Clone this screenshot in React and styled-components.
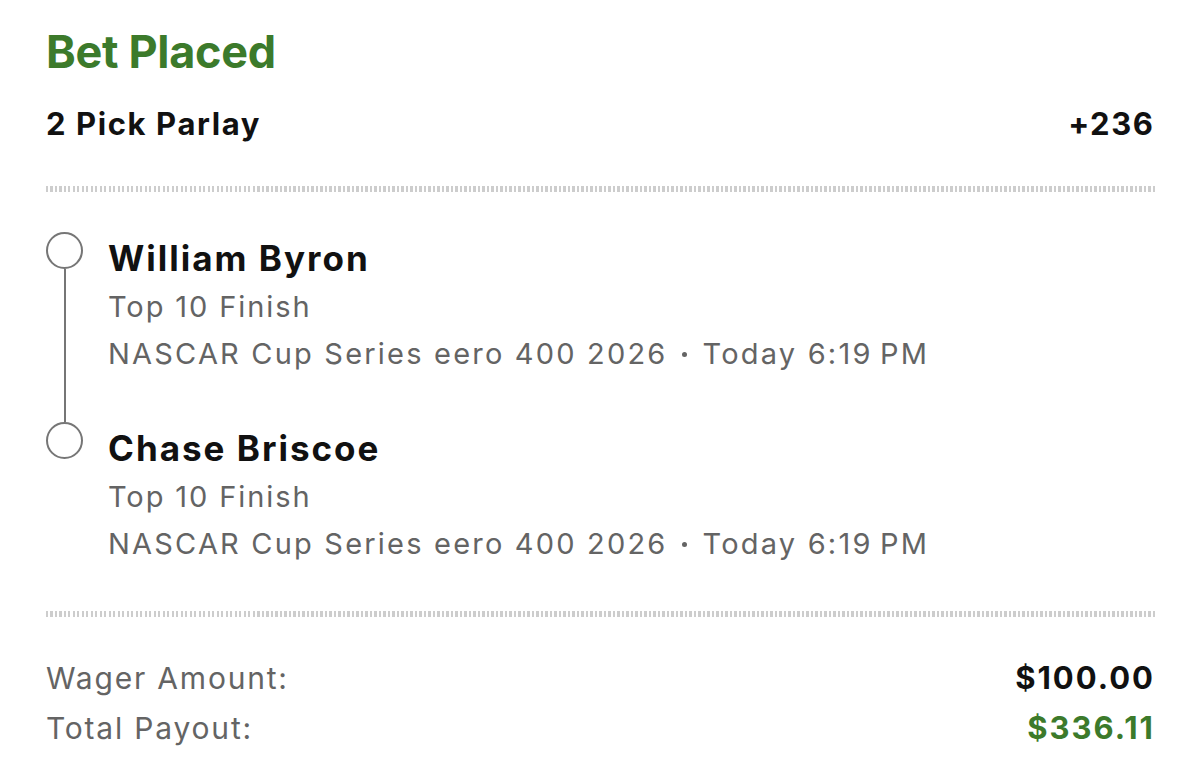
import React from 'react';
import styled, { createGlobalStyle } from 'styled-components';

const GlobalStyle = createGlobalStyle`
  html, body {
    margin: 0;
    padding: 0;
    background: #fff;
  }
  body {
    font-family: Inter, "Noto Sans", "Liberation Sans", sans-serif;
    color: #111;
    -webkit-font-smoothing: antialiased;
  }
`;

const GREEN = '#3c7a2b';
const MUTED = '#646464';

const Page = styled.div`
  width: 1200px;
  box-sizing: border-box;
  padding: 24px 47px 0 46px;
`;

const Title = styled.h1`
  margin: 0;
  font-size: 45px;
  line-height: 56px;
  font-weight: 700;
  letter-spacing: -0.3px;
  color: ${GREEN};
`;

const Row = styled.div`
  display: flex;
  justify-content: space-between;
  align-items: baseline;
`;

const Heading = styled.div`
  font-size: 31px;
  line-height: 44px;
  font-weight: 700;
  letter-spacing: 1.6px;
  margin-right: ${(p) => (p.$end ? '-1.6px' : '0')};
`;

const Divider = styled.div`
  height: 6px;
  margin: ${(p) => p.$space || '0'};
  margin-right: -4px;
  background-image: repeating-linear-gradient(
    to right,
    #cdcdcd 0,
    #cdcdcd 2px,
    transparent 2px,
    transparent 4.5px
  );
`;

const Legs = styled.div`
  display: flex;
  flex-direction: column;
`;

const Leg = styled.div`
  display: grid;
  grid-template-columns: 37px 1fr;
  column-gap: 25px;
  padding-bottom: ${(p) => (p.$last ? '0' : '45px')};
`;

const Rail = styled.div`
  display: flex;
  flex-direction: column;
  align-items: center;
  margin-bottom: ${(p) => (p.$last ? '0' : '-45px')};
`;

const Node = styled.div`
  width: 37px;
  height: 37px;
  box-sizing: border-box;
  border: 2px solid #767676;
  border-radius: 50%;
  flex: none;
`;

const Track = styled.div`
  flex: 1;
  width: 2px;
  background: #767676;
`;

const Pick = styled.div`
  display: flex;
  flex-direction: column;
  margin-top: 1px;
`;

const Name = styled.div`
  font-size: 35px;
  line-height: 50px;
  font-weight: 700;
  letter-spacing: 2px;
`;

const Market = styled.div`
  font-size: 29px;
  line-height: 48px;
  letter-spacing: 1.9px;
  color: ${MUTED};
`;

const Event = styled(Market)`
  line-height: 46px;
  letter-spacing: 2.2px;
`;

const Sep = styled.span`
  display: inline-block;
  width: 5px;
  height: 5px;
  border-radius: 50%;
  background: ${MUTED};
  vertical-align: middle;
  margin: 0 16px 0 14px;
  position: relative;
  top: -2px;
`;

const Summary = styled.div`
  display: flex;
  flex-direction: column;
`;

const Label = styled.span`
  font-size: 30px;
  line-height: 50px;
  letter-spacing: 1.8px;
  color: ${MUTED};
`;

const Amount = styled.span`
  font-size: 31px;
  line-height: 50px;
  font-weight: 700;
  letter-spacing: 2px;
  margin-right: -2px;
  color: ${(p) => (p.$positive ? GREEN : '#111')};
`;

const legs = [
  { name: 'William Byron', market: 'Top 10 Finish', event: 'NASCAR Cup Series eero 400 2026', time: 'Today 6:19\u202FPM' },
  { name: 'Chase Briscoe', market: 'Top 10 Finish', event: 'NASCAR Cup Series eero 400 2026', time: 'Today 6:19\u202FPM' },
];

export default function App() {
  return (
    <>
      <GlobalStyle />
      <Page>
        <Title>Bet Placed</Title>
        <Row style={{ marginTop: 22 }}>
          <Heading>2 Pick Parlay</Heading>
          <Heading $end>+236</Heading>
        </Row>

        <Divider $space="40px 0 40px" />

        <Legs>
          {legs.map((leg, i) => {
            const last = i === legs.length - 1;
            return (
              <Leg key={leg.name} $last={last}>
                <Rail $last={last}>
                  <Node />
                  {!last && <Track />}
                </Rail>
                <Pick>
                  <Name>{leg.name}</Name>
                  <Market>{leg.market}</Market>
                  <Event>
                    {leg.event}
                    <Sep />
                    {leg.time}
                  </Event>
                </Pick>
              </Leg>
            );
          })}
        </Legs>

        <Divider $space="44px 0 36px" />

        <Summary>
          <Row>
            <Label>Wager Amount:</Label>
            <Amount>$100.00</Amount>
          </Row>
          <Row>
            <Label>Total Payout:</Label>
            <Amount $positive>$336.11</Amount>
          </Row>
        </Summary>
      </Page>
    </>
  );
}
